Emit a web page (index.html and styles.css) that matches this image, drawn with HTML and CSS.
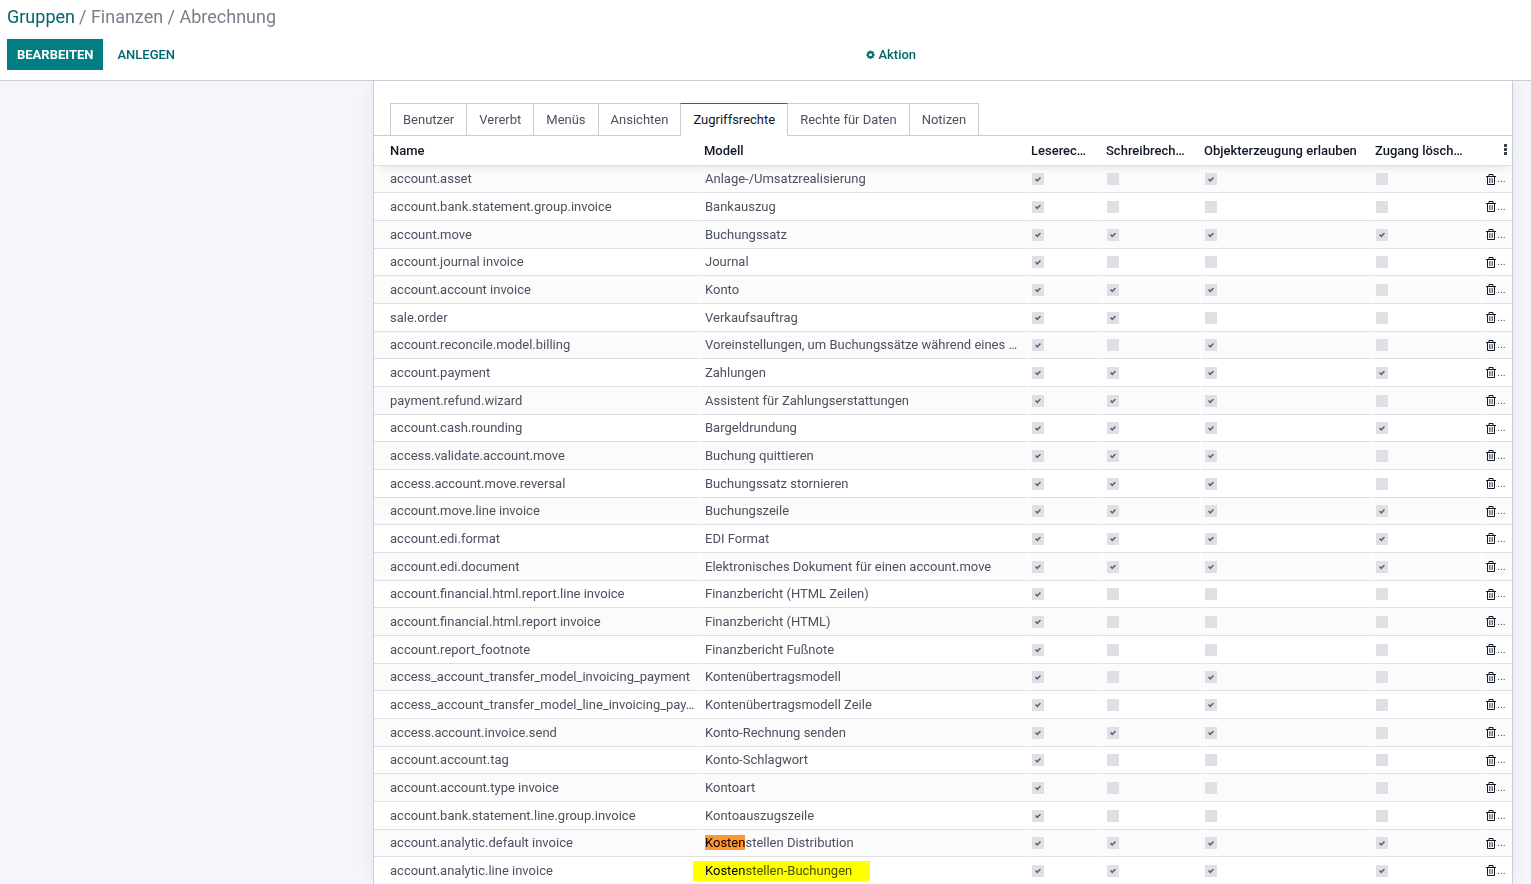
FILE: index.html
```html
<!DOCTYPE html>
<html lang="de">
<head>
    <meta charset="UTF-8">
    <meta name="viewport" content="width=device-width, initial-scale=1.0">
    <title>Finanzen / Abrechnung</title>
    <link rel="stylesheet" href="styles.css">
</head>
<body>
    <header class="control-panel">
        <nav class="breadcrumb">
            <a href="#">Gruppen</a><span>/ Finanzen / Abrechnung</span>
        </nav>
        <div class="toolbar">
            <div class="toolbar-buttons">
                <button type="button" class="btn btn-primary">Bearbeiten</button>
                <button type="button" class="btn btn-secondary">Anlegen</button>
            </div>
            <button type="button" class="btn-action">
                <svg class="icon-cog" viewBox="0 0 18 18" aria-hidden="true">
                    <path fill="currentColor" fill-rule="evenodd" d="M7.4 1h3.2l.4 2.2 1.2.5L14 2.4 16 4.500l-1.300 1.800.5 1.200 2.200.4v3.100l-2.200.4-.5 1.200L16 14.400l-2 2-1.800-1.300-1.200.5-.4 2.200H7.400L7 15.600l-1.200-.5L4 16.400l-2-2 1.300-1.800-.5-1.200L.6 11V7.900l2.200-.4.5-1.200L2 4.500l2-2.100 1.800 1.300L7 3.200zM9 6.400a3 3 0 1 0 0 6 3 3 0 0 0 0-6z"/>
                </svg>
                Aktion
            </button>
        </div>
    </header>

    <main class="content">
        <section class="sheet">
            <div class="tabs" role="tablist">
                <button type="button" class="tab" role="tab">Benutzer</button>
                <button type="button" class="tab" role="tab">Vererbt</button>
                <button type="button" class="tab" role="tab">Menüs</button>
                <button type="button" class="tab" role="tab">Ansichten</button>
                <button type="button" class="tab active" role="tab" aria-selected="true">Zugriffsrechte</button>
                <button type="button" class="tab" role="tab">Rechte für Daten</button>
                <button type="button" class="tab" role="tab">Notizen</button>
            </div>
            <table class="rights">
                <colgroup>
                    <col>
                    <col>
                    <col class="col-read">
                    <col class="col-write">
                    <col class="col-create">
                    <col class="col-delete">
                    <col class="col-trash">
                </colgroup>
                <thead>
                    <tr>
                        <th>Name</th>
                        <th>Modell</th>
                        <th>Leserec…</th>
                        <th>Schreibrech…</th>
                        <th>Objekterzeugung erlauben</th>
                        <th>Zugang lösch…</th>
                        <th class="options">
                            <button type="button" class="btn-options" aria-label="Spalten">
                                <svg viewBox="0 0 3 11" aria-hidden="true">
                                    <path fill="currentColor" d="M0 0h3v3H0zM0 4h3v3H0zM0 8h3v3H0z"/>
                                </svg>
                            </button>
                        </th>
                    </tr>
                </thead>
                <tbody id="rows"></tbody>
            </table>
        </section>
    </main>

    <script src="script.js"></script>
</body>
</html>
```

FILE: styles.css
```css
* {
    box-sizing: border-box;
}
body {
    margin: 0;
    height: 100vh;
    overflow: hidden;
    display: flex;
    flex-direction: column;
    background-color: #f5f6fb;
    color: #4c5160;
    font-family: Roboto, "Noto Sans", sans-serif;
    font-size: 13px;
    line-height: 18px;
}
button {
    font: inherit;
    color: inherit;
    background: none;
    border: none;
    padding: 0;
    cursor: pointer;
}

/* Control panel */
.control-panel {
    flex: none;
    padding: 5px 0 10px 7px;
    background-color: #fff;
    border-bottom: 1px solid #c9ccd2;
}
.breadcrumb {
    display: flex;
    gap: 4px;
    font-size: 18px;
    line-height: 24px;
    color: #7a7f8c;
}
.breadcrumb a {
    color: #01666b;
    text-decoration: none;
}
.toolbar {
    display: grid;
    grid-template-columns: 56% 1fr;
    align-items: center;
    margin-top: 10px;
}
.toolbar-buttons {
    display: flex;
    gap: 4px;
}
.btn {
    height: 31px;
    padding: 0 10px;
    font-weight: 500;
    text-transform: uppercase;
}
.btn-primary {
    background-color: #017e84;
    color: #fff;
    font-weight: 700;
}
.btn-secondary {
    color: #01666b;
}
.btn-action {
    display: flex;
    align-items: center;
    gap: 3px;
    padding: 0 6px;
    color: #01666b;
    font-weight: 500;
}
.icon-cog {
    width: 9px;
    height: 9px;
}

/* Sheet */
.content {
    flex: 1;
    display: flex;
    min-height: 0;
    overflow: hidden;
    padding: 0 18px 0 373px;
}
.sheet {
    flex: 1;
    min-width: 0;
    padding-top: 22px;
    background-color: #fff;
    border: 1px solid #c9ccd2;
    border-width: 0 1px;
    box-shadow: 0 0 16px rgba(60, 60, 90, 0.08);
}
.tabs {
    display: flex;
    padding-left: 16px;
    border-bottom: 1px solid #c9ccd2;
}
.tab {
    height: 33px;
    margin-bottom: -1px;
    padding: 0 12px;
    border: 1px solid #c9ccd2;
}
.tab + .tab {
    margin-left: -1px;
}
.tab.active {
    position: relative;
    z-index: 1;
    color: #111827;
    background-color: #fff;
    border-top-color: #71476a;
    border-bottom-color: #fff;
}

/* Access rights */
.rights {
    width: 100%;
    table-layout: fixed;
    border-collapse: separate;
    border-spacing: 0;
}
.col-read {
    width: 75px;
}
.col-write {
    width: 98px;
}
.col-create {
    width: 171px;
}
.col-delete {
    width: 110px;
}
.col-trash {
    width: 30px;
}
.rights thead {
    position: relative;
    box-shadow: 0 6px 8px -6px rgba(0, 0, 0, 0.15);
}
.rights th,
.rights td {
    overflow: hidden;
    text-overflow: ellipsis;
    white-space: nowrap;
    text-align: left;
    border-bottom: 1px solid #dfe0e2;
}
.rights th {
    height: 30px;
    padding: 0 3px;
    background-color: #fff;
    color: #111827;
    font-weight: 500;
}
.rights td {
    height: 28px;
    padding: 0 4px;
}
.rights tr:nth-child(3n+1) td {
    height: 27px;
}
.rights td:not(:last-child) {
    border-right: 1px solid #fff;
}
.rights th:first-child,
.rights td:first-child {
    padding-left: 16px;
}
.rights tbody tr:nth-child(odd) {
    background-color: #fbfbfb;
}
.rights .options {
    padding: 0 5px 0 0;
    text-align: right;
}
.btn-options svg {
    display: block;
    width: 3px;
    height: 11px;
    color: #374151;
}
.rights input {
    appearance: none;
    display: block;
    width: 12px;
    height: 12px;
    margin: 0;
    background-color: #dfe0e5;
}
.rights input:checked::before {
    content: "";
    display: block;
    width: 6px;
    height: 5px;
    margin: 4px 3px;
    background-color: #5c6170;
    clip-path: polygon(0 50%, 18% 32%, 38% 54%, 82% 0, 100% 20%, 38% 100%);
}
.rights .trash {
    text-overflow: clip;
}
.trash-content {
    display: flex;
    align-items: center;
    gap: 1px;
    font-size: 11px;
}
.icon-trash {
    display: block;
    width: 10px;
    height: 11px;
    color: #111827;
}

/* Search hits */
.hit {
    color: #000;
    background: none;
}
.hit-current {
    background-color: #ff9632;
}
.rights .marked {
    overflow: visible;
}
.marker {
    position: relative;
}
.marker::after {
    content: "";
    position: absolute;
    inset: -2px -18px -3px -12px;
    background-color: #ff0;
    mix-blend-mode: multiply;
}
```

FILE: script.js
```js
// name, model, rights as read / write / create / delete
const rights = [
    ['account.asset', 'Anlage-/Umsatzrealisierung', '1010'],
    ['account.bank.statement.group.invoice', 'Bankauszug', '1000'],
    ['account.move', 'Buchungssatz', '1111'],
    ['account.journal invoice', 'Journal', '1000'],
    ['account.account invoice', 'Konto', '1110'],
    ['sale.order', 'Verkaufsauftrag', '1100'],
    ['account.reconcile.model.billing', 'Voreinstellungen, um Buchungssätze während eines …', '1010'],
    ['account.payment', 'Zahlungen', '1111'],
    ['payment.refund.wizard', 'Assistent für Zahlungserstattungen', '1110'],
    ['account.cash.rounding', 'Bargeldrundung', '1111'],
    ['access.validate.account.move', 'Buchung quittieren', '1110'],
    ['access.account.move.reversal', 'Buchungssatz stornieren', '1110'],
    ['account.move.line invoice', 'Buchungszeile', '1111'],
    ['account.edi.format', 'EDI Format', '1111'],
    ['account.edi.document', 'Elektronisches Dokument für einen account.move', '1111'],
    ['account.financial.html.report.line invoice', 'Finanzbericht (HTML Zeilen)', '1000'],
    ['account.financial.html.report invoice', 'Finanzbericht (HTML)', '1000'],
    ['account.report_footnote', 'Finanzbericht Fußnote', '1000'],
    ['access_account_transfer_model_invoicing_payment', 'Kontenübertragsmodell', '1010'],
    ['access_account_transfer_model_line_invoicing_pay…', 'Kontenübertragsmodell Zeile', '1010'],
    ['access.account.invoice.send', 'Konto-Rechnung senden', '1110'],
    ['account.account.tag', 'Konto-Schlagwort', '1000'],
    ['account.account.type invoice', 'Kontoart', '1000'],
    ['account.bank.statement.line.group.invoice', 'Kontoauszugszeile', '1000'],
    ['account.analytic.default invoice', '<mark class="hit hit-current">Kosten</mark>stellen Distribution', '1111'],
    ['account.analytic.line invoice', '<span class="marker"><mark class="hit">Kosten</mark>stellen-Buchungen</span>', '1111']
];

const labels = ['Leserechte', 'Schreibrechte', 'Objekterzeugung', 'Zugang löschen'];

const trashIcon = `
    <svg class="icon-trash" viewBox="0 0 10 11" fill="none" stroke="currentColor" aria-hidden="true">
        <path d="M0 2.500h10M3 2.500V.5h4v2M1.500 2.500v8h7v-8"/>
        <path d="M3.500 4v5M5 4v5M6.500 4v5" stroke-width=".6"/>
    </svg>`;

document.getElementById('rows').innerHTML = rights.map(([name, model, flags]) => {
    const boxes = [...flags].map((flag, i) =>
        `<td><input type="checkbox" aria-label="${labels[i]}" disabled ${flag === '1' ? 'checked' : ''}></td>`
    ).join('');
    const marked = model.includes('marker') ? ' class="marked"' : '';
    return `<tr>
        <td>${name}</td>
        <td${marked}>${model}</td>
        ${boxes}
        <td class="trash"><div class="trash-content"><button type="button" aria-label="Löschen">${trashIcon}</button>...</div></td>
    </tr>`;
}).join('');
```
